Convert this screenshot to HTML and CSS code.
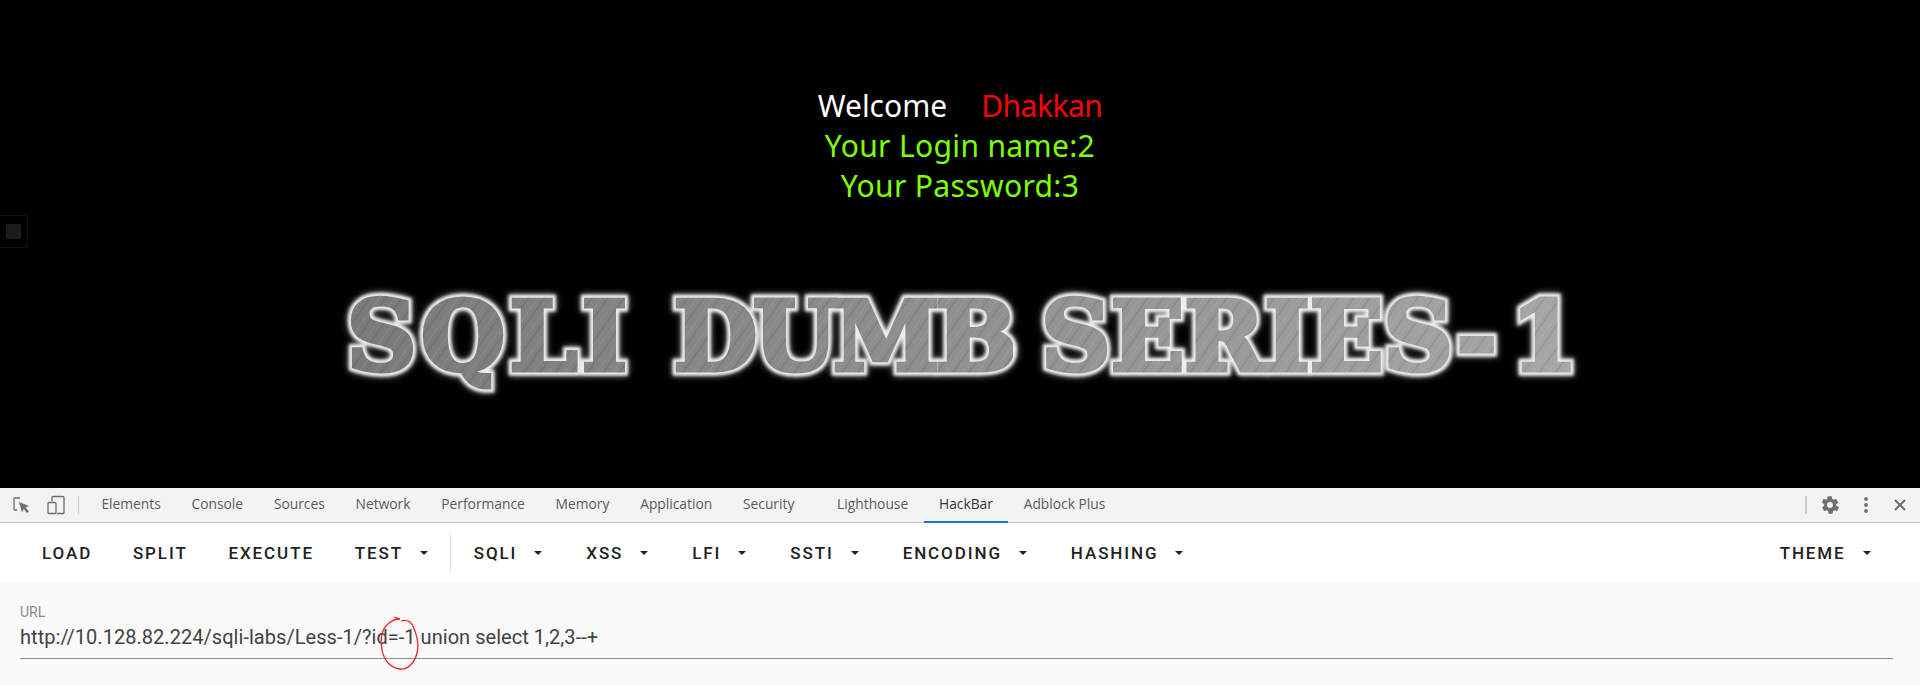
FILE: index.html
```html
<!DOCTYPE html>
<html lang="en">

<head>
    <meta charset="UTF-8">
    <title>SQLI DUMB SERIES-1</title>
    <link rel="stylesheet" href="styles.css">
</head>

<body>
    <main class="page">
        <div class="ghost"><div class="ghost-inner"></div></div>
        <div class="greeting">
            <div class="line"><span class="welcome">Welcome</span><span class="name">Dhakkan</span></div>
            <div class="line green">Your Login name:2</div>
            <div class="line green">Your Password:3</div>
        </div>
        <div class="title">
            <div class="word word-sqli" data-text="SQLI"><span class="word-fill">SQLI</span></div>
            <div class="word word-dumb" data-text="DUMB"><span class="word-fill">DUMB</span></div>
            <div class="word word-series" data-text="SERIES-"><span class="word-fill">SERIES-</span></div>
            <div class="word word-one" data-text="1"><span class="word-fill">1</span></div>
        </div>
    </main>

    <section class="devtools">
        <div class="toolbar">
            <svg class="tool-icon" width="20" height="20" viewBox="0 0 20 20">
                <path d="M9 3H3.500Q3 3 3 3.500V14.500Q3 15 3.500 15H6" fill="none" stroke="#6e6e6e" stroke-width="1.300"/>
                <path d="M8 7L18 11L14.500 12.500L18 16.500L16 18L12.800 14L11 17.500Z" fill="#6e6e6e"/>
            </svg>
            <svg class="tool-icon device" width="20" height="20" viewBox="0 0 20 20">
                <path d="M6 6V2.500Q6 1.500 7 1.500H17Q18 1.500 18 2.500V17.500Q18 18.500 17 18.500H11" fill="none" stroke="#6e6e6e" stroke-width="1.300"/>
                <rect x="2" y="7.500" width="8" height="11" rx="1" fill="none" stroke="#6e6e6e" stroke-width="1.300"/>
            </svg>
            <div class="tool-sep"></div>
            <nav class="tabs">
                <a class="tab">Elements</a>
                <a class="tab">Console</a>
                <a class="tab">Sources</a>
                <a class="tab">Network</a>
                <a class="tab">Performance</a>
                <a class="tab">Memory</a>
                <a class="tab">Application</a>
                <a class="tab">Security</a>
                <a class="tab lighthouse">Lighthouse</a>
                <a class="tab active">HackBar</a>
                <a class="tab">Adblock Plus</a>
            </nav>
            <div class="tool-right">
                <div class="tool-sep wide"></div>
                <svg class="gear" width="20" height="20" viewBox="0 0 24 24">
                    <path fill="#6e6e6e" d="M19.400 13a7.500 7.500 0 0 0 0-2l2.200-1.700a.5.5 0 0 0 .1-.7l-2.100-3.600a.5.5 0 0 0-.6-.2l-2.600 1a7.600 7.600 0 0 0-1.700-1l-.4-2.800a.5.5 0 0 0-.5-.4h-4.200a.5.5 0 0 0-.5.4l-.4 2.800a7.600 7.600 0 0 0-1.700 1l-2.600-1a.5.5 0 0 0-.6.2L2.700 8.600a.5.5 0 0 0 .1.7L5 11a7.500 7.500 0 0 0 0 2l-2.200 1.700a.5.5 0 0 0-.1.7l2.100 3.600a.5.5 0 0 0 .6.2l2.600-1a7.600 7.600 0 0 0 1.700 1l.4 2.800a.5.5 0 0 0 .5.4h4.200a.5.5 0 0 0 .5-.4l.4-2.800a7.600 7.600 0 0 0 1.700-1l2.600 1a.5.5 0 0 0 .6-.2l2.100-3.600a.5.5 0 0 0-.1-.7zM12 15.500a3.500 3.500 0 1 1 0-7 3.500 3.500 0 0 1 0 7z"/>
                </svg>
                <svg class="dots" width="6" height="18" viewBox="0 0 6 18">
                    <circle cx="3" cy="3" r="1.900" fill="#6e6e6e"/>
                    <circle cx="3" cy="9" r="1.900" fill="#6e6e6e"/>
                    <circle cx="3" cy="15" r="1.900" fill="#6e6e6e"/>
                </svg>
                <svg class="close" width="12" height="12" viewBox="0 0 12 12">
                    <path d="M1 1L11 11M11 1L1 11" stroke="#6e6e6e" stroke-width="2" fill="none"/>
                </svg>
            </div>
        </div>

        <div class="actions">
            <button class="btn">LOAD</button>
            <button class="btn">SPLIT</button>
            <button class="btn">EXECUTE</button>
            <button class="btn caret">TEST</button>
            <div class="action-sep"></div>
            <button class="btn caret">SQLI</button>
            <button class="btn caret">XSS</button>
            <button class="btn caret">LFI</button>
            <button class="btn caret">SSTI</button>
            <button class="btn caret">ENCODING</button>
            <button class="btn caret">HASHING</button>
            <button class="btn caret theme">THEME</button>
        </div>

        <div class="url-panel">
            <label class="url-label">URL</label>
            <div class="url-value">http://10.128.82.224/sqli-labs/Less-1/?id=-1 union select 1,2,3--+</div>
            <svg class="scribble" width="44" height="60" viewBox="0 0 44 60">
                <path d="M25 6C31 4 35 7 37 11C41 20 43 30 41 38C39 47 32 55 24 54C15 53 8 46 6 35C4 24 6 14 12 9C16 5 20 4 24 4L18 2" fill="none" stroke="#e8242c" stroke-width="1.300"/>
            </svg>
        </div>
    </section>
</body>

</html>
```

FILE: styles.css
```css
* {
    box-sizing: border-box;
}

html,
body {
    margin: 0;
    height: 685px;
    overflow: hidden;
}

body {
    display: flex;
    flex-direction: column;
    font-family: 'Roboto', sans-serif;
}

.page {
    position: relative;
    height: 488px;
    background: #000;
    display: flex;
    flex-direction: column;
    align-items: center;
    padding-top: 86px;
}

.ghost {
    position: absolute;
    left: -6px;
    top: 215px;
    width: 34px;
    height: 33px;
    border: 1px solid #141414;
    border-radius: 3px;
    display: flex;
    align-items: center;
    justify-content: center;
}

.ghost-inner {
    width: 15px;
    height: 15px;
    margin-left: 4px;
    background: #1c1c1c;
}

.greeting {
    font-family: 'Noto Sans', sans-serif;
    font-size: 30px;
    line-height: 40px;
    text-align: center;
}

.welcome {
    color: #fff;
    margin-right: 34px;
}

.name {
    color: #f00;
    letter-spacing: -0.5px;
}

.green {
    color: #7fff00;
    letter-spacing: 0.35px;
}

.title {
    display: flex;
    margin-top: 68px;
    padding-left: 5px;
    font-family: 'DejaVu Serif', serif;
    font-weight: bold;
    font-size: 96px;
    line-height: 125px;
    white-space: nowrap;
}

.word {
    position: relative;
}

.word::before {
    content: attr(data-text);
    position: absolute;
    left: 0;
    top: 0;
    color: #eee;
    -webkit-text-stroke: 11px #eee;
    filter: blur(1.500px) drop-shadow(0 0 3px rgba(255, 255, 255, 0.6));
}

.word-fill {
    position: relative;
    color: transparent;
    -webkit-text-stroke: 5px transparent;
    background:
        repeating-linear-gradient(125deg, rgba(255, 255, 255, 0.08) 0 1px, transparent 1px 5px, rgba(0, 0, 0, 0.07) 5px 7px, transparent 7px 13px),
        linear-gradient(90deg, #7a7a7a 18%, #a6a6a6 82%);
    background-attachment: fixed;
    -webkit-background-clip: text;
    background-clip: text;
}

.word-sqli {
    letter-spacing: 4.800px;
}

.word-dumb {
    margin-left: 42px;
    letter-spacing: -3.700px;
}

.word-series {
    margin-left: 28px;
    letter-spacing: 0.400px;
}

.word-one {
    margin-left: 14px;
}

.devtools {
    flex: 1;
    display: flex;
    flex-direction: column;
}

.toolbar {
    height: 35px;
    background: #f3f3f3;
    border-bottom: 1px solid #ccc;
    display: flex;
    align-items: center;
    padding-left: 11px;
}

.tool-icon.device {
    margin-left: 15px;
}

.tool-sep {
    width: 1px;
    height: 18px;
    margin: 0 7px 0 12px;
    background: #ccc;
}

.tabs {
    display: flex;
    height: 100%;
}

.tab {
    display: flex;
    align-items: center;
    padding: 0 15.400px 2px;
    font-family: 'Open Sans', sans-serif;
    font-size: 13.800px;
    color: #5a5a5a;
    border-bottom: 2px solid transparent;
    margin-bottom: -1px;
}

.tab.lighthouse {
    margin-left: 12px;
}

.tab.active {
    color: #333;
    border-bottom-color: #1a73e8;
}

.tool-right {
    margin-left: auto;
    display: flex;
    align-items: center;
}

.tool-sep.wide {
    width: 2px;
    margin: 0 13px 0 0;
}

.dots {
    margin-left: 23px;
}

.close {
    margin: 0 14px 0 25px;
}

.actions {
    height: 60px;
    background: #fff;
    display: flex;
    align-items: center;
    padding-left: 21.600px;
}

.btn {
    font-family: 'Roboto', sans-serif;
    font-weight: 500;
    font-size: 17px;
    letter-spacing: 1.900px;
    color: #212121;
    background: none;
    border: 0;
    padding: 0 20.400px;
    height: 36px;
    display: flex;
    align-items: center;
}

.btn.caret::after {
    content: "";
    margin: 0 3.200px 0 17px;
    border-left: 4px solid transparent;
    border-right: 4px solid transparent;
    border-top: 4px solid #212121;
}

.action-sep {
    width: 1px;
    height: 40px;
    margin: 0 2px 0 -1.200px;
    background: #ddd;
}

.theme {
    margin-left: auto;
    margin-right: 25.800px;
}

.url-panel {
    position: relative;
    flex: 1;
    background: #fafafa;
    padding: 21px 27px 0 20px;
}

.url-label {
    display: block;
    font-size: 14px;
    line-height: 16px;
    color: #8a8a8a;
}

.url-value {
    font-size: 20px;
    letter-spacing: 0.040px;
    line-height: 30px;
    height: 39px;
    padding-top: 2px;
    color: #424242;
    border-bottom: 1px solid #8c8c8c;
}

.scribble {
    position: absolute;
    left: 376px;
    top: 32px;
}
```
